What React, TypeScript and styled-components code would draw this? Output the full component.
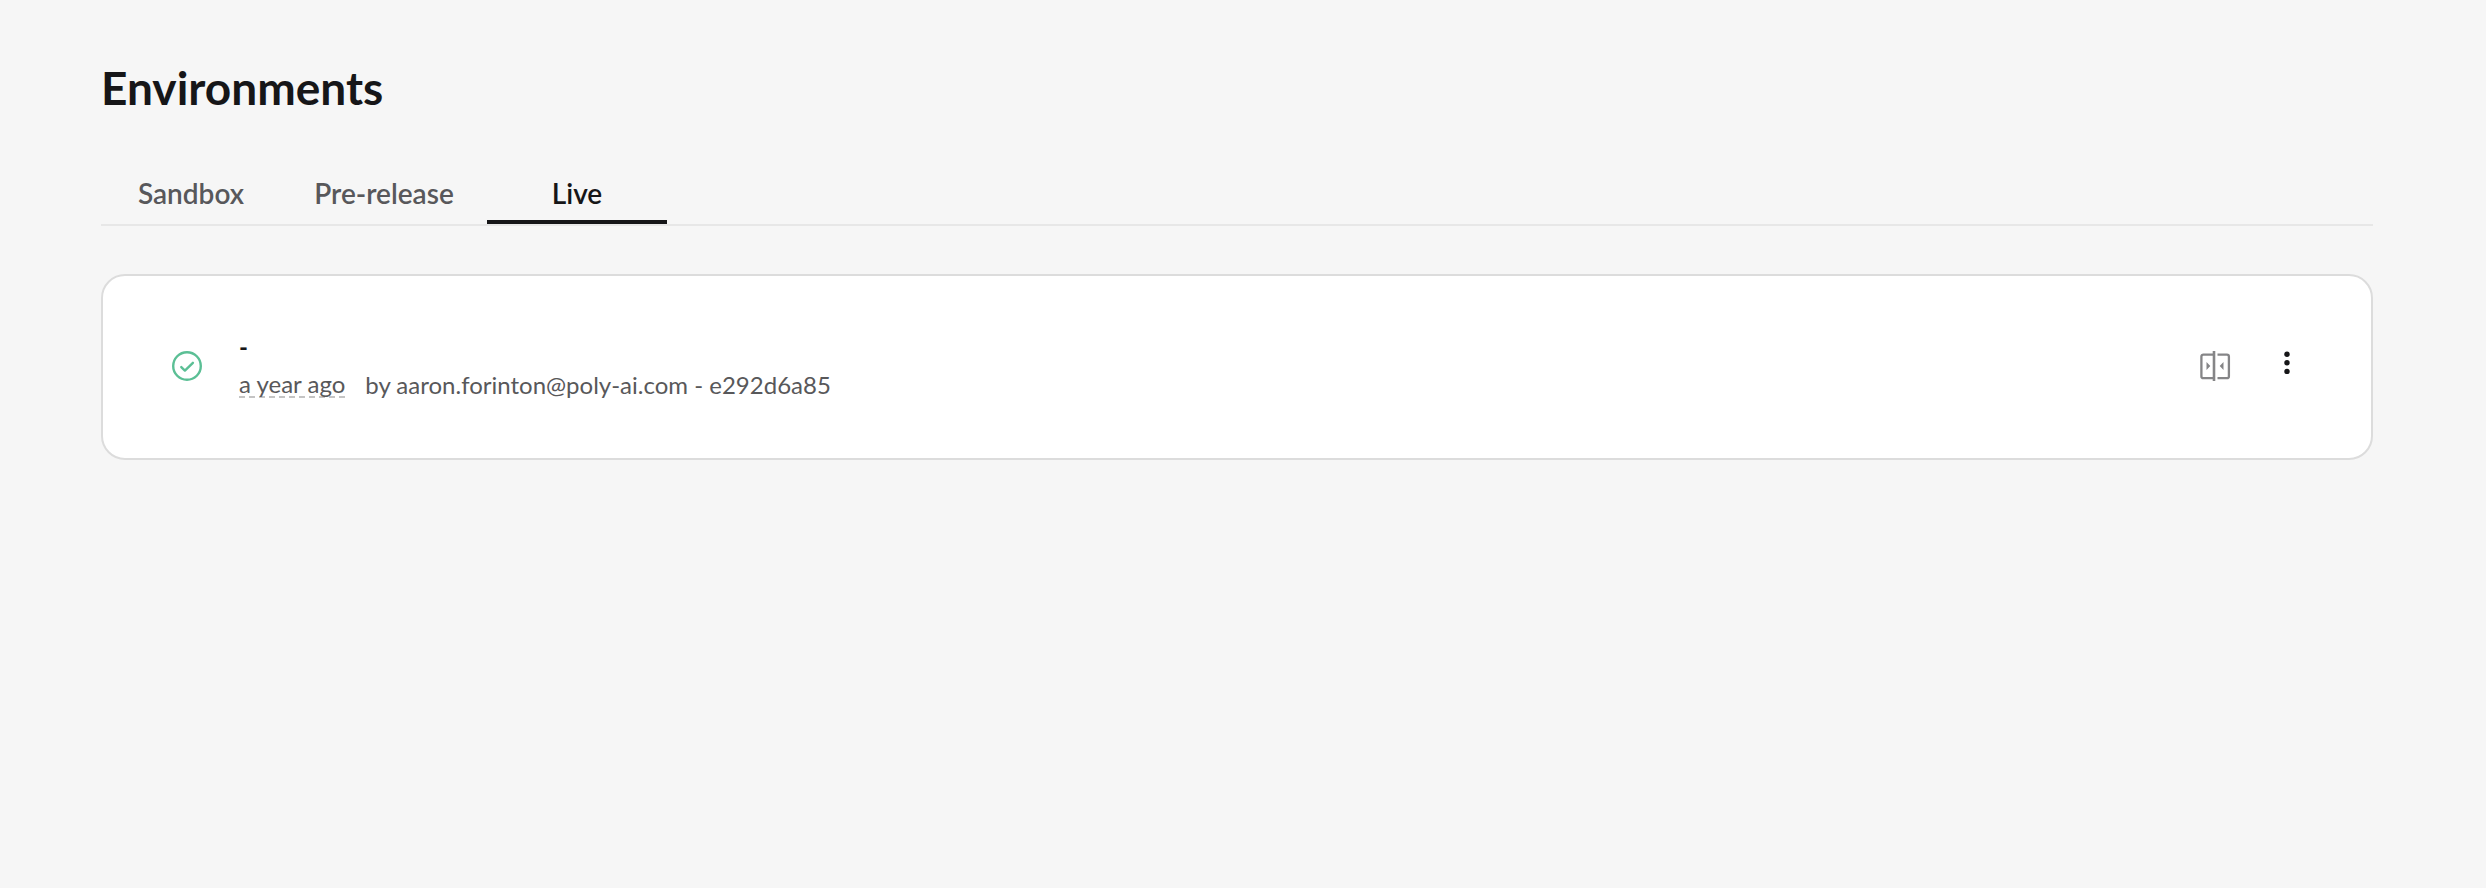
import React, { useState } from "react";
import styled, { createGlobalStyle } from "styled-components";

const GlobalStyle = createGlobalStyle`
  * { box-sizing: border-box; }
  body {
    margin: 0;
    background: #f6f6f6;
    color: #161618;
    font-family: Lato, "Open Sans", sans-serif;
  }
`;

const Page = styled.main`
  display: flex;
  flex-direction: column;
  padding: 60px 113px 60px 101px;
`;

const Title = styled.h1`
  margin: 0;
  font-size: 46px;
  line-height: 56px;
  font-weight: 700;
`;

const TabList = styled.nav`
  display: flex;
  gap: 13px;
  margin-top: 48px;
  border-bottom: 2px solid #e7e7e7;
`;

const Tab = styled.button<{ $active: boolean }>`
  width: 180px;
  height: 60px;
  padding: 2px 0 0;
  border: 0;
  border-bottom: 4px solid ${(p) => (p.$active ? "#161618" : "transparent")};
  background: none;
  color: ${(p) => (p.$active ? "#161618" : "#58585b")};
  font: 600 28px/32px Lato, "Open Sans", sans-serif;
  cursor: pointer;
`;

const Card = styled.article`
  display: flex;
  align-items: center;
  margin-top: 48px;
  min-height: 186px;
  padding: 0 68px;
  border: 2px solid #dcdcdc;
  border-radius: 24px;
  background: #fff;
`;

const Status = styled.svg`
  flex: none;
  width: 32px;
  height: 32px;
  margin-right: 36px;
`;

const Details = styled.div`
  flex: 1;
  min-width: 0;
`;

const Name = styled.h2`
  margin: 0;
  font-size: 24px;
  line-height: 36px;
  font-weight: 700;
`;

const Meta = styled.p`
  display: flex;
  gap: 20px;
  margin: 0;
  color: #58585a;
  font-size: 24px;
  line-height: 40px;
`;

const Age = styled.time`
  align-self: center;
  line-height: 24px;
  border-bottom: 2px dashed #c4c4c4;
`;

const Actions = styled.div`
  display: flex;
  align-items: center;
  gap: 36px;
`;

const IconButton = styled.button`
  display: flex;
  padding: 0;
  border: 0;
  background: none;
  cursor: pointer;
`;

const tabs = ["Sandbox", "Pre-release", "Live"];

export default function App() {
  const [active, setActive] = useState("Live");
  return (
    <>
      <GlobalStyle />
      <Page>
        <Title>Environments</Title>
        <TabList aria-label="Environments">
          {tabs.map((tab) => (
            <Tab key={tab} type="button" $active={tab === active} onClick={() => setActive(tab)}>
              {tab}
            </Tab>
          ))}
        </TabList>
        <Card>
          <Status viewBox="0 0 32 32" fill="none" stroke="#5bbf95" strokeLinecap="round" strokeLinejoin="round" aria-hidden="true">
            <circle cx="16" cy="15" r="13.8" strokeWidth="2.4" />
            <path d="M10.3 16.1L13.9 19.6L21.9 11.8" strokeWidth="2.4" />
          </Status>
          <Details>
            <Name>-</Name>
            <Meta>
              <Age>a year ago</Age>
              <span>by aaron.forinton@poly-ai.com - e292d6a85</span>
            </Meta>
          </Details>
          <Actions>
            <IconButton type="button" aria-label="Compare versions">
              <svg width="32" height="32" viewBox="0 1 32 32" fill="none" stroke="#858587" strokeWidth="2.3">
                <path d="M15 4.6H4.4a2 2 0 0 0-2 2v19.6a2 2 0 0 0 2 2H15" />
                <path d="M18.5 4.6h9.4a2 2 0 0 1 2 2v19.6a2 2 0 0 1-2 2h-9.4" />
                <path d="M15 1v30" strokeWidth="2.6" />
                <path d="M7.5 12v8l3.8-4zM24.5 12v8l-3.8-4z" fill="#858587" stroke="none" />
              </svg>
            </IconButton>
            <IconButton type="button" aria-label="More options">
              <svg width="36" height="36" viewBox="0 0 36 36" fill="#161618">
                <circle cx="20" cy="5.2" r="2.7" />
                <circle cx="20" cy="13.8" r="2.7" />
                <circle cx="20" cy="22.4" r="2.7" />
              </svg>
            </IconButton>
          </Actions>
        </Card>
      </Page>
    </>
  );
}
